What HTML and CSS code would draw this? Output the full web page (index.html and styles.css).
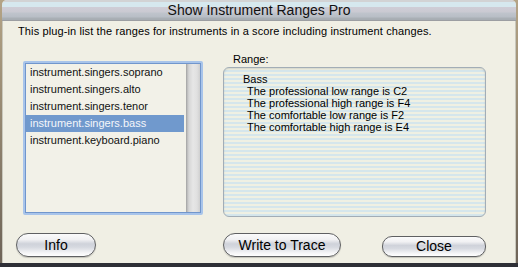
FILE: index.html
```html
<!DOCTYPE html>
<html>
<head>
<meta charset="utf-8">
<title>Show Instrument Ranges Pro</title>
<link rel="stylesheet" href="styles.css">
</head>
<body>
<div class="desktop">
  <div class="window">
    <div class="titlebar">Show Instrument Ranges Pro</div>
    <p class="desc">This plug-in list the ranges for instruments in a score including instrument changes.</p>
    <div class="main">
      <div class="listbox">
        <ul class="items">
          <li>instrument.singers.soprano</li>
          <li>instrument.singers.alto</li>
          <li>instrument.singers.tenor</li>
          <li class="selected">instrument.singers.bass</li>
          <li>instrument.keyboard.piano</li>
        </ul>
        <div class="scrolltrack"></div>
      </div>
      <div class="range">
        <div class="range-label">Range:</div>
        <div class="rangebox">
          <div class="line head">Bass</div>
          <div class="line">The professional low range is C2</div>
          <div class="line">The professional high range is F4</div>
          <div class="line">The comfortable low range is F2</div>
          <div class="line">The comfortable high range is E4</div>
        </div>
      </div>
    </div>
    <div class="buttons">
      <button class="btn btn-info">Info</button>
      <button class="btn btn-trace">Write to Trace</button>
      <button class="btn btn-close">Close</button>
    </div>
  </div>
</div>
</body>
</html>
```
FILE: styles.css
```css
html, body {
  margin: 0;
  padding: 0;
}
body {
  width: 518px;
  height: 267px;
  overflow: hidden;
  background: linear-gradient(to bottom, #b4a486 0, #6e6458 263px, #2e2f36 263px, #2e2f36 267px);
  font-family: "Liberation Sans", Arial, sans-serif;
  color: #000;
}
.desktop {
  padding-left: 2px;
}
.window {
  width: 514px;
  height: 263px;
  background: #f0efe4;
  border-radius: 5px 5px 0 0;
  overflow: hidden;
  box-shadow: inset 1px 0 0 #c9c8bd, inset -1px 0 0 #c9c8bd;
}
.titlebar {
  height: 20px;
  line-height: 21px;
  text-align: center;
  font-size: 14px;
  color: #111;
  border-bottom: 1px solid #9c9ea2;
  background: linear-gradient(to bottom,
    #d2d3d4 0, #d2d3d4 2px,
    #d6e8ee 2px, #d6e8ee 7px,
    #cfcdd6 7px, #cacad2 12px,
    #bfc4cc 13px, #b8bec6 17px,
    #aab0b6 18px, #a6acb2 20px);
}
.desc {
  margin: 3px 0 0 0;
  padding-left: 16px;
  font-size: 11px;
  line-height: 14px;
  height: 14px;
  letter-spacing: 0.12px;
  color: #000;
}
.main {
  display: flex;
  align-items: flex-start;
  padding-left: 21px;
}
.listbox {
  box-sizing: border-box;
  width: 180px;
  height: 154px;
  margin-top: 23px;
  border: 2px solid #a8c4ea;
  border-radius: 2px;
  box-shadow: inset 0 0 0 1px #7196cc;
  padding: 1px;
  background: #f2f1e8;
  display: flex;
}
.items {
  list-style: none;
  margin: 0;
  padding: 0;
  flex: 1;
}
.items li {
  height: 17px;
  line-height: 17px;
  font-size: 11px;
  padding-left: 4px;
  margin-right: 2px;
  white-space: nowrap;
  color: #111;
}
.items li.selected {
  background: #7099cd;
  color: #f4f6fa;
}
.scrolltrack {
  width: 14px;
  background: linear-gradient(to right, #9e9e9e 0, #b8b8b8 1px, #d6d6d6 3px, #e6e6e6 7px, #e0e0e0 11px, #cfcfcf 14px);
}
.range {
  margin-left: 20px;
  width: 263px;
  margin-top: 15px;
}
.range-label {
  font-size: 11px;
  line-height: 13px;
  height: 13px;
  padding-left: 10px;
  margin-bottom: 1px;
}
.rangebox {
  box-sizing: border-box;
  height: 150px;
  border: 1px solid #a2adb6;
  border-radius: 6px;
  padding: 5px 0 0 19px;
  background: repeating-linear-gradient(to bottom, #eff0e3 0, #eff0e3 2px, #d5e6ec 2px, #d5e6ec 4px);
  box-shadow: inset 0 1px 2px rgba(0, 0, 0, 0.12);
}
.line {
  font-size: 11px;
  line-height: 12px;
  padding-left: 4px;
  white-space: nowrap;
}
.line.head {
  padding-left: 0;
}
.buttons {
  display: flex;
  align-items: flex-end;
  margin-top: 16px;
  padding-left: 14px;
}
.btn {
  box-sizing: border-box;
  height: 24px;
  border: 1px solid #5f6062;
  border-radius: 12px;
  padding: 0;
  font-family: "Liberation Sans", Arial, sans-serif;
  font-size: 14px;
  line-height: 22px;
  color: #000;
  background: linear-gradient(to bottom, #fbfbfb 0, #f1f1f3 25%, #cfd2da 45%, #d6d9e0 60%, #f4f4f6 85%, #ffffff 100%);
  box-shadow: 0 1px 1px rgba(0, 0, 0, 0.18);
}
.btn-info {
  width: 80px;
}
.btn-trace {
  width: 118px;
  margin-left: 127px;
}
.btn-close {
  width: 104px;
  height: 21px;
  line-height: 19px;
  margin-left: 41px;
  border-radius: 10px;
}
```
